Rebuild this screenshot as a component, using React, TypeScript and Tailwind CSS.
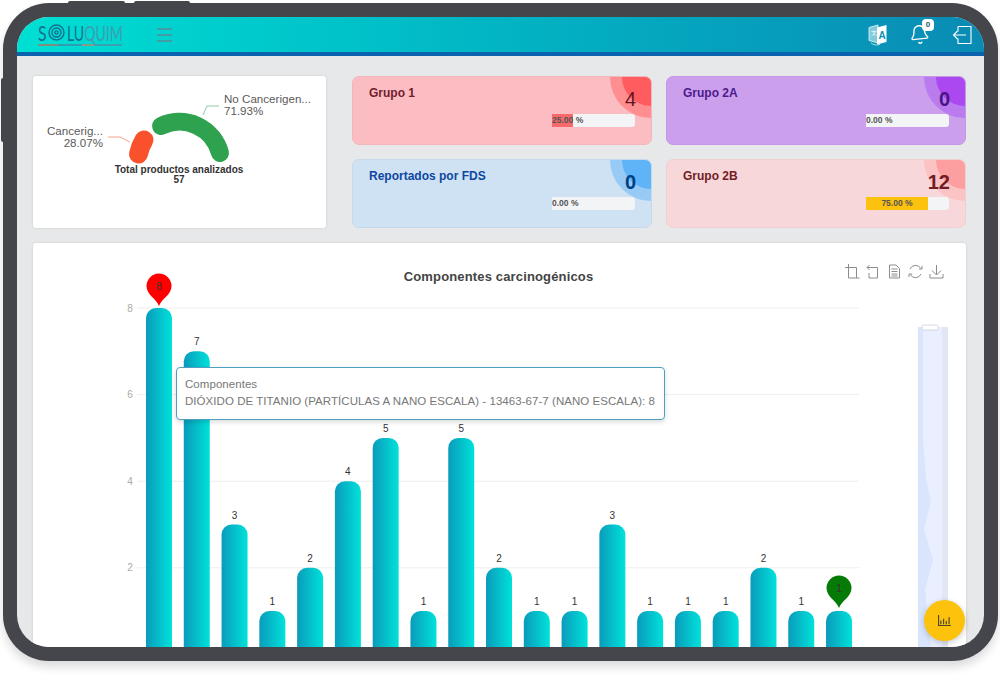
import { Bell } from "lucide-react";

const bars = [8, 7, 3, 1, 2, 4, 5, 1, 5, 2, 1, 1, 3, 1, 1, 1, 2, 1, 1];
const unit = 43.3;
const baseY = 654.4;

const groups = [
  {
    name: "Grupo 1", value: 4, pct: 25, card: "bg-[#fbbcc2] border-[#f3b6bb]", title: "text-[#721c2e]", num: "text-[#6b1420] font-medium",
    outer: "bg-[#ff8e90]", inner: "bg-[#ff5c60]", fill: "bg-[#f8696b]", center: false,
  },
  {
    name: "Grupo 2A", value: 0, pct: 0, card: "bg-[#cb9fec] border-[#c498e6]", title: "text-[#4b1a8c]", num: "text-[#4a1383] font-bold",
    outer: "bg-[#ba7bef]", inner: "bg-[#ab48ef]", fill: "bg-[#ab48ef]", center: false,
  },
  {
    name: "Reportados por FDS", value: 0, pct: 0, card: "bg-[#cfe2f3] border-[#c5d9ea]", title: "text-[#0d47a1]", num: "text-[#004085] font-bold",
    outer: "bg-[#98caf6]", inner: "bg-[#5fb4f7]", fill: "bg-[#5fb4f7]", center: false,
  },
  {
    name: "Grupo 2B", value: 12, pct: 75, card: "bg-[#f8d7da] border-[#eed0d3]", title: "text-[#721c24]", num: "text-[#721c24] font-bold",
    outer: "bg-[#fbc3c4]", inner: "bg-[#fd9fa0]", fill: "bg-[#fdc20e]", center: true,
  },
];

function Logo() {
  return (
    <div className="relative h-[24px] w-[86px] shrink-0">
      <div className="flex h-[20px] items-center font-['Lato',sans-serif] text-[22px] font-normal leading-none">
        <span className="w-[10px] shrink-0 origin-left scale-x-[0.72] text-[#156f8e]">S</span>
        <svg width="17" height="17" viewBox="0 0 17 17" fill="none" stroke="#12708e" strokeWidth="1.400" className="mr-[2px] shrink-0">
          <circle cx="8.500" cy="8.500" r="7.500" />
          <circle cx="8.500" cy="8.500" r="4.500" />
          <circle cx="8.500" cy="8.500" r="1.600" />
        </svg>
        <span className="shrink-0 origin-left scale-x-[0.64] whitespace-nowrap text-[#156f8e]">
          LU<span className="text-[#3d9db0]">QUIM</span>
        </span>
      </div>
      <div className="absolute left-0 top-[21px] flex h-[2px] w-[84px]">
        <div className="w-[20px] bg-[#7c8f7c]" />
        <div className="w-[24px] bg-[#2f9cb0]" />
        <div className="w-[12px] bg-[#8a9a8a]" />
        <div className="flex-1 bg-[#3aa0b2]" />
      </div>
    </div>
  );
}

function Header() {
  return (
    <header className="flex h-[39px] items-center border-b-[4px] border-[#0b62ae] bg-linear-to-r from-[#00dfd3] to-[#0a8bb4] pl-[21px] pr-[12px]">
      <Logo />
      {/* menu */}
      <div className="ml-[33px] flex w-[15px] flex-col gap-[4px]">
        <div className="h-[2px] bg-[#3f9ea6]" />
        <div className="h-[2px] bg-[#3f9ea6]" />
        <div className="h-[2px] bg-[#3f9ea6]" />
      </div>

      <div className="ml-auto flex items-center">
        <svg width="20" height="22" viewBox="0 0 20 22" className="mr-[21px]">
          <path d="M1 3.500 10 1v18l-9-2.500z" fill="#7fcbdc" stroke="#e8f7fa" strokeWidth="0.800" />
          <path d="M9 3.500 18.500 1v17L9 20.500z" fill="#ffffff" />
          <path d="M3 19c2 2 6 2.500 9 1.500" fill="none" stroke="#d5eff4" strokeWidth="0.800" />
          <text x="3" y="11" fontSize="6" fill="#ffffff">文</text>
          <text x="10.500" y="15" fontSize="10" fontWeight="700" fill="#0f8fb0">A</text>
        </svg>
        <div className="relative mr-[22px]">
          <Bell size={21} strokeWidth={1.600} className="-rotate-6 text-white" />
          <span className="absolute right-[-4px] top-[-5px] flex h-[12px] w-[12px] items-center justify-center rounded-[4px] bg-white text-[8px] font-bold text-[#1d5b6e]">
            0
          </span>
        </div>
        <svg width="20" height="20" viewBox="0 0 20 20" fill="none" stroke="#ffffff" strokeWidth="1.100">
          <path d="M6 1.500h13v17H6v-5M6 6.500v-5" />
          <path d="M14 10H1.500M5.500 6 1.500 10l4 4" />
        </svg>
      </div>
    </header>
  );
}

function GaugeCard() {
  return (
    <div className="w-[293px] rounded-[3px] bg-white shadow-[0_0_3px_rgba(0,0,0,0.12)]">
      <svg viewBox="33 76 293 152" width="293" height="152" className="block">
        <path d="M138.500 154A42 42 0 0 1 144 140" fill="none" stroke="#f9512b" strokeWidth="19" strokeLinecap="round" />
        <path d="M161 126A42 42 0 0 1 220 153" fill="none" stroke="#2ea24e" strokeWidth="18" strokeLinecap="round" />
        <path d="M108 137h12l10 5" fill="none" stroke="#f7a48e" strokeWidth="1" />
        <path d="M203 115l4-9h12" fill="none" stroke="#8fcaa8" strokeWidth="1" />
        <g fontSize="11.600" fill="#5a5a5a">
          <text x="103" y="134.500" textAnchor="end">Cancerig...</text>
          <text x="103" y="146.500" textAnchor="end">28.07%</text>
          <text x="224" y="103">No Cancerigen...</text>
          <text x="224" y="115">71.93%</text>
        </g>
        <g fontSize="10" fontWeight="700" fill="#333333" textAnchor="middle">
          <text x="179" y="173">Total productos analizados</text>
          <text x="179" y="183">57</text>
        </g>
      </svg>
    </div>
  );
}

function GroupCard({ g }: { g: (typeof groups)[number] }) {
  return (
    <div className={`relative h-[69px] overflow-hidden rounded-[7px] border ${g.card}`}>
      {/* corner circles */}
      <div className={`absolute right-[-41px] top-[-41px] h-[82px] w-[82px] rounded-full ${g.outer}`} />
      <div className={`absolute right-[-29px] top-[-29px] h-[58px] w-[58px] rounded-full ${g.inner}`} />

      <p className={`absolute left-[16px] top-[9px] text-[12px] font-bold leading-[14px] ${g.title}`}>{g.name}</p>
      <p className={`absolute right-[15px] top-[10px] text-[20px] leading-[24px] ${g.num}`}>{g.value}</p>

      <div className="absolute left-[199px] top-[37px] h-[13px] w-[83px] overflow-hidden rounded-r-[3px] bg-[#f2f4f6]">
        <div className={`flex h-full items-center ${g.fill}`} style={{ width: `${g.pct}%` }} />
        <span className={`absolute top-0 text-[8.500px] font-bold leading-[13px] text-[#555555] ${g.center ? "left-0 w-[62px] text-center" : "left-0"}`}>
          {g.pct.toFixed(2)} %
        </span>
      </div>
    </div>
  );
}

function Toolbar() {
  return (
    <div className="absolute right-[22px] top-[21px] flex items-center gap-[6px] text-[#8c8c8c]">
      <svg width="15" height="15" viewBox="0 0 15 15" fill="none" stroke="currentColor" strokeWidth="1">
        <path d="M0 3.500h11.500V14M3.500 0v14h11" />
      </svg>
      <svg width="15" height="15" viewBox="0 0 15 15" fill="none" stroke="currentColor" strokeWidth="1">
        <path d="M3.500 1 1 3.500 3.500 6M1 3.500h10.500V14H3V9" />
      </svg>
      <svg width="15" height="15" viewBox="0 0 15 15" fill="none" stroke="currentColor" strokeWidth="1">
        <path d="M2.500 1h6.500l3.500 3.500V14h-10zM4.500 5h6M4.500 7.500h6M4.500 10h6M4.500 12h6" />
      </svg>
      <svg width="15" height="15" viewBox="0 0 15 15" fill="none" stroke="currentColor" strokeWidth="1">
        <path d="M2 5A6 6 0 0 1 12.800 4.500M13 10A6 6 0 0 1 2.200 10.500" />
        <path d="M11 5h3V2M4 10H1v3" />
      </svg>
      <svg width="15" height="15" viewBox="0 0 15 15" fill="none" stroke="currentColor" strokeWidth="1">
        <path d="M7.500 1v9.500M3 6.500l4.500 4.500L12 6.500M1 10v4h13v-4" />
      </svg>
    </div>
  );
}

function Pin({ x, tip, color, label }: { x: number; tip: number; color: string; label: string }) {
  const cy = tip - 20;
  return (
    <g>
      <path
        d={`M${x} ${tip}C${x - 3} ${tip - 8} ${x - 12.500} ${tip - 11} ${x - 12.500} ${cy}A12.500 12.500 0 0 1 ${x + 12.500} ${cy}C${x + 12.500} ${tip - 11} ${x + 3} ${tip - 8} ${x} ${tip}Z`}
        fill={color}
      />
      <text x={x} y={cy + 3.500} fontSize="10" textAnchor="middle" fill="#333333">{label}</text>
    </g>
  );
}

function Chart() {
  return (
    <svg viewBox="33 243 933 410" width="933" height="410" className="block">
      <defs>
        <linearGradient id="bar" x1="0" y1="0" x2="1" y2="0">
          <stop offset="0" stopColor="#0a9bbb" />
          <stop offset="1" stopColor="#00e2da" />
        </linearGradient>
      </defs>

      <text x="498.500" y="281" fontSize="13" fontWeight="700" textAnchor="middle" fill="#444444" letterSpacing="0.150">
        Componentes carcinogénicos
      </text>

      {/* grid */}
      {[8, 6, 4, 2].map((v) => (
        <g key={v}>
          <line x1="137" x2="859" y1={baseY - v * unit} y2={baseY - v * unit} stroke="#eeeeee" />
          <text x="130" y={baseY - v * unit + 3.500} fontSize="10" textAnchor="middle" fill="#aaaaaa">{v}</text>
        </g>
      ))}

      {/* bars */}
      {bars.map((v, i) => {
        const x = 146 + i * 37.78;
        const top = baseY - v * unit;
        return (
          <g key={i}>
            <path
              d={`M${x} 660V${top + 10}A10 10 0 0 1 ${x + 10} ${top}H${x + 16}A10 10 0 0 1 ${x + 26} ${top + 10}V660Z`}
              fill="url(#bar)"
            />
            {i !== 0 && i !== bars.length - 1 && (
              <text x={x + 13} y={top - 6} fontSize="10" textAnchor="middle" fill="#333333">{v}</text>
            )}
          </g>
        );
      })}
      <Pin x={159} tip={306} color="#ff0000" label="8" />
      <Pin x={839} tip={608} color="#067a06" label="1" />

      {/* data zoom */}
      <rect x="918" y="327" width="30" height="330" fill="#e3e6f3" />
      <rect x="918" y="327" width="24" height="330" fill="#d9e5fc" />
      <path d="M923 327V440L926 480 931 500 924 530 933 560 925 590 928 620 932 657H942V327Z" fill="#e9effe" />
      <rect x="922" y="325" width="16" height="5" rx="1.500" fill="#ffffff" stroke="#c9ced8" strokeWidth="0.800" />
    </svg>
  );
}

export default function App() {
  return (
    <div className="relative h-[682px] w-[1000px] overflow-hidden bg-white font-['Liberation_Sans',Arial,sans-serif]">
      {/* hardware buttons */}
      <div className="absolute left-[68px] top-[1px] h-[3px] w-[57px] rounded-t-[2px] bg-[#45464b]" />
      <div className="absolute left-[134px] top-[1px] h-[3px] w-[56px] rounded-t-[2px] bg-[#45464b]" />
      <div className="absolute left-[1px] top-[78px] h-[64px] w-[3px] rounded-l-[2px] bg-[#45464b]" />

      <div className="ml-[3px] mt-[3px] h-[658px] w-[995px] rounded-[46px] bg-[#45464b] p-[14px] shadow-[0_6px_10px_rgba(0,0,0,0.14)]">
        <div className="relative h-[630px] w-[967px] overflow-hidden rounded-[32px] bg-[#e6e8ea]">
          <Header />

          <div className="pl-[16px] pr-[18px] pt-[20px]">
            <div className="flex gap-[26px]">
              <GaugeCard />
              <div className="grid w-[614px] grid-cols-2 gap-x-[14px] gap-y-[14px]">
                {groups.map((g) => (
                  <GroupCard key={g.name} g={g} />
                ))}
              </div>
            </div>

            <div className="relative mt-[15px] w-[933px] rounded-t-[3px] bg-white shadow-[0_0_3px_rgba(0,0,0,0.12)]">
              <Chart />
              <Toolbar />

              {/* tooltip */}
              <div className="absolute left-[143px] top-[124px] h-[53px] w-[489px] rounded-[4px] border border-[#4fa0c0] bg-white pl-[8px] pt-[8px] text-[11.500px] leading-[17px] tracking-[0.05px] text-[#777777] shadow-[0_2px_5px_rgba(0,0,0,0.15)]">
                <p>Componentes</p>
                <p className="whitespace-nowrap">DIÓXIDO DE TITANIO (PARTÍCULAS A NANO ESCALA) - 13463-67-7 (NANO ESCALA): 8</p>
              </div>
            </div>
          </div>

          {/* fab */}
          <button className="absolute left-[907px] top-[583px] flex h-[41px] w-[41px] items-center justify-center rounded-full bg-[#fdc20b] shadow-[0_2px_6px_rgba(0,0,0,0.2)]">
            <svg width="13" height="11" viewBox="0 0 14 12" fill="none" stroke="#4a4a2a" strokeWidth="1.300">
              <path d="M0.500 0v11.500H14M3 10V6M6 10V4M9 10V6.500M12 10V2.500" />
            </svg>
          </button>
        </div>
      </div>
    </div>
  );
}
